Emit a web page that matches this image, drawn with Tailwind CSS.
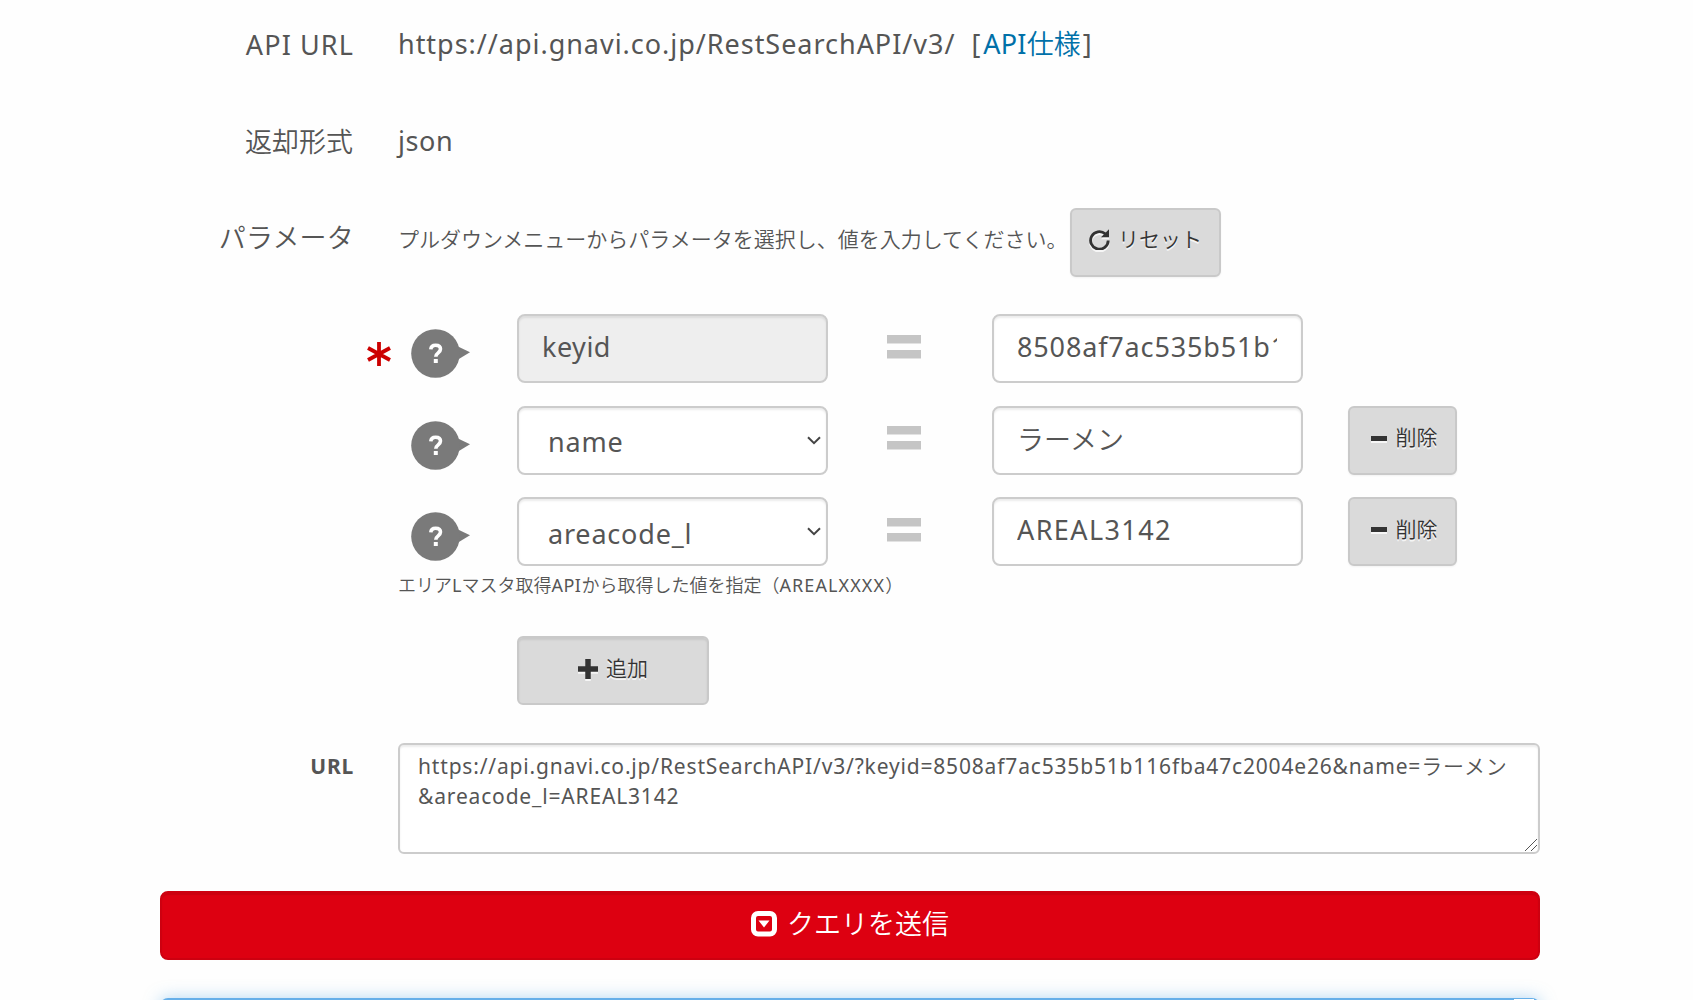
<!DOCTYPE html>
<html lang="ja">
<head>
<meta charset="utf-8">
<title>API テストツール</title>
<script src="https://cdn.jsdelivr.net/npm/@tailwindcss/browser@4"></script>
</head>
<body class="h-[1000px] overflow-hidden bg-[#fefefe] font-['Noto_Sans','Noto_Sans_CJK_JP_DemiLight','Noto_Sans_CJK_JP_Light','Noto_Sans_CJK_JP',sans-serif] text-[#555]">
<svg class="hidden">
  <symbol id="help" viewBox="0 0 59 49"><path d="M47 17.5L59 23.2 47 30.5z" fill="#7a7a7a"/><circle cx="24.5" cy="24.5" r="24.3" fill="#7a7a7a"/><path d="M19.8 20.4c.2-3 2-4.2 4.8-4.2 2.900 0 4.900 1.400 4.900 3.900 0 3.900-4.700 3.600-4.700 7.600" fill="none" stroke="#fff" stroke-width="3.600"/><rect x="22.800" y="30" width="4" height="4" fill="#fff"/></symbol>
  <symbol id="equal" viewBox="0 0 34 24"><path d="M0 0h34v8.500H0zM0 15h34v8.500H0z" fill="#c5c5c5"/></symbol>
  <symbol id="chevron" viewBox="0 0 14 9"><path d="M1 1.200l6 6 6-6" fill="none" stroke="#444" stroke-width="2"/></symbol>
</svg>
<main class="ml-[160px] w-[1380px]">
  <section class="flex h-[88px] items-center gap-[45px] text-[27px] leading-[36px]">
    <div class="w-[194px] whitespace-nowrap pt-0.5 text-right tracking-[1.1px]">API URL</div>
    <div class="-ml-px whitespace-nowrap"><span class="tracking-[0.97px]">https://api.gnavi.co.jp/RestSearchAPI/v3/</span><span class="ml-[16px]">[</span><a class="ml-[3px] text-[#0070a8]"><span class="tracking-[0.2px]">API</span>仕様</a><span class="ml-[2px]">]</span></div>
  </section>
  <section class="flex h-[106px] items-center gap-[45px] text-[27px] leading-[36px]">
    <div class="w-[193px] pt-0.5 text-right">返却形式</div>
    <div class="tracking-[0.6px]">json</div>
  </section>
  <section class="mt-[14px] flex h-[69px] gap-[45px]">
    <div class="w-[194px] whitespace-nowrap pt-[12px] text-right text-[27px] leading-[36px] tracking-[0.2px]">パラメータ</div>
    <div class="-ml-px flex">
      <p class="w-[672px] whitespace-nowrap pt-[15px] text-[21px] leading-[32px]">プルダウンメニューからパラメータを選択し、値を入力してください。</p>
      <button class="flex h-[69px] w-[151px] justify-center gap-[8px] rounded-md border-2 border-[#c9c9c9] bg-[#dadada] pt-[13px] text-[21px] leading-[32px] text-[#333] shadow-[0_1px_2px_rgba(0,0,0,0.05)] [text-shadow:0_2px_0_rgba(255,255,255,0.75)]">
        <svg class="mt-[6px] h-[21px] w-[21px] drop-shadow-[0_2px_0_rgba(255,255,255,0.75)]" viewBox="0 0 21 21"><path d="M16.200 4.800A8.800 8.800 0 1 0 19.200 11.500" fill="none" stroke="#333" stroke-width="2.800"/><path d="M20 .3v8h-8z" fill="#333"/></svg>
        <span>リセット</span>
      </button>
    </div>
  </section>

  <section class="mt-[37px]">
    <div class="flex h-[69px] pl-[207px]">
      <svg class="mt-[28px] h-[24px] w-[24px]" viewBox="0 0 24 24"><path d="M12 0v24M1 6l22 12M23 6L1 18" stroke="#c00" stroke-width="3.800" fill="none"/></svg>
      <svg class="ml-[20px] mt-[15px] h-[49px] w-[59px]"><use href="#help"/></svg>
      <input class="ml-[47px] h-[69px] w-[311px] rounded-lg border-2 border-[#ccc] bg-[#eee] px-[23px] pb-[4px] text-[27px] tracking-[0.5px] shadow-[inset_0_2px_2px_rgba(0,0,0,0.075)]" value="keyid" readonly>
      <svg class="ml-[58.500px] mt-[21px] h-[24px] w-[34px]"><use href="#equal"/></svg>
      <input class="ml-[71.500px] h-[69px] w-[311px] rounded-lg border-2 border-[#ccc] bg-white pl-[23px] pr-[24px] pb-[4px] text-[27px] tracking-[0.85px] shadow-[inset_0_2px_2px_rgba(0,0,0,0.075)]" value="8508af7ac535b51b116fba47c2004e26">
    </div>
    <div class="mt-[23px] flex h-[69px] pl-[251px]">
      <svg class="mt-[15px] h-[49px] w-[59px]"><use href="#help"/></svg>
      <div class="ml-[47px] flex h-[69px] w-[311px] justify-between rounded-lg border-2 border-[#ccc] bg-white pl-[29px] pr-[5px] pt-[16px] text-[27px] leading-[36px] tracking-[0.8px] shadow-[inset_0_2px_2px_rgba(0,0,0,0.075)]"><span>name</span><svg class="mt-[12px] h-[9px] w-[14px]"><use href="#chevron"/></svg></div>
      <svg class="ml-[58.500px] mt-[20px] h-[24px] w-[34px]"><use href="#equal"/></svg>
      <input class="ml-[71.500px] h-[69px] w-[311px] rounded-lg border-2 border-[#ccc] bg-white px-[23px] pb-[5px] text-[27px] shadow-[inset_0_2px_2px_rgba(0,0,0,0.075)]" value="ラーメン">
      <button class="ml-[45px] flex h-[69px] w-[109px] justify-center gap-[9px] rounded-md border-2 border-[#c9c9c9] bg-[#dadada] pl-[3px] pt-[13px] text-[21px] leading-[32px] text-[#333] shadow-[0_1px_2px_rgba(0,0,0,0.05)] [text-shadow:0_2px_0_rgba(255,255,255,0.75)]"><i class="mt-[15px] h-[5px] w-[16px] bg-[#333] shadow-[0_2px_0_rgba(255,255,255,0.75)]"></i>削除</button>
    </div>
    <div class="mt-[22px] flex h-[69px] pl-[251px]">
      <svg class="mt-[15px] h-[49px] w-[59px]"><use href="#help"/></svg>
      <div class="ml-[47px] flex h-[69px] w-[311px] justify-between rounded-lg border-2 border-[#ccc] bg-white pl-[29px] pr-[5px] pt-[16px] text-[27px] leading-[36px] tracking-[0.8px] shadow-[inset_0_2px_2px_rgba(0,0,0,0.075)]"><span class="pt-px">areacode_l</span><svg class="mt-[12px] h-[9px] w-[14px]"><use href="#chevron"/></svg></div>
      <svg class="ml-[58.500px] mt-[21px] h-[24px] w-[34px]"><use href="#equal"/></svg>
      <input class="ml-[71.500px] h-[69px] w-[311px] rounded-lg border-2 border-[#ccc] bg-white px-[23px] pb-[4px] text-[27px] tracking-[1.4px] shadow-[inset_0_2px_2px_rgba(0,0,0,0.075)]" value="AREAL3142">
      <button class="ml-[45px] flex h-[69px] w-[109px] justify-center gap-[9px] rounded-md border-2 border-[#c9c9c9] bg-[#dadada] pl-[3px] pt-[14px] text-[21px] leading-[32px] text-[#333] shadow-[0_1px_2px_rgba(0,0,0,0.05)] [text-shadow:0_2px_0_rgba(255,255,255,0.75)]"><i class="mt-[14px] h-[5px] w-[16px] bg-[#333] shadow-[0_2px_0_rgba(255,255,255,0.75)]"></i>削除</button>
    </div>
    <p class="h-[70px] pl-[238px] pt-[5px] text-[18px] leading-[28px]">エリアLマスタ取得<span class="tracking-[0.5px]">API</span>から取得した値を指定（<span class="tracking-[1.1px]">AREALXXXX</span>）</p>
    <button class="ml-[357px] flex h-[69px] w-[192px] justify-center gap-[8px] rounded-md border-2 border-[#c9c9c9] bg-[#dadada] pt-[14px] text-[21px] leading-[32px] text-[#333] shadow-[inset_0_2px_2px_rgba(0,0,0,0.08)] [text-shadow:0_2px_0_rgba(255,255,255,0.75)]">
      <svg class="mt-[7px] h-[20px] w-[20px] drop-shadow-[0_2px_0_rgba(255,255,255,0.75)]" viewBox="0 0 20 20"><path d="M10 0v20M0 10h20" stroke="#333" stroke-width="5.500"/></svg>
      <span>追加</span>
    </button>
  </section>

  <section class="mt-[38px] flex gap-[45px]">
    <div class="w-[194px] pt-[8px] text-right text-[21px] font-bold leading-[30px] tracking-[0.8px]">URL</div>
    <div class="relative -ml-px">
      <textarea class="block h-[111px] w-[1142px] resize-none rounded-md border-2 border-[#ccc] bg-white px-[18px] pt-[6px] text-[21px] leading-[30px] tracking-[0.83px] shadow-[inset_0_2px_2px_rgba(0,0,0,0.075)]">https://api.gnavi.co.jp/RestSearchAPI/v3/?keyid=8508af7ac535b51b116fba47c2004e26&amp;name=ラーメン
&amp;areacode_l=AREAL3142</textarea>
      <svg class="absolute bottom-[3px] right-[3px] h-[12px] w-[12px]" viewBox="0 0 12 12"><path d="M0 12L12 0M6 12l6-6" stroke="#555" stroke-width="1"/></svg>
    </div>
  </section>

  <button class="mt-[37px] flex h-[69px] w-full justify-center gap-[10px] rounded-lg border-2 border-[#cd0010] bg-[#dd0011] pt-[13px] text-[27px] leading-[36px] text-white shadow-[inset_0_2px_1px_rgba(0,0,0,0.08)]">
    <svg class="mt-[5px] h-[26px] w-[26px]" viewBox="0 0 26 26"><rect x="2.500" y="2.500" width="21" height="20.500" rx="4.500" fill="none" stroke="#fff" stroke-width="5"/><path d="M7.500 9.500h11l-5.500 7z" fill="#fff"/></svg>
    <span>クエリを送信</span>
  </button>
  <div class="mt-[38px] flex h-[40px] justify-end rounded-lg bg-[#66afe9] pr-[6px] pt-px shadow-[0_0_16px_rgba(102,175,233,0.5)]"><div class="w-[20px] bg-white"></div></div>
</main>
</body>
</html>
